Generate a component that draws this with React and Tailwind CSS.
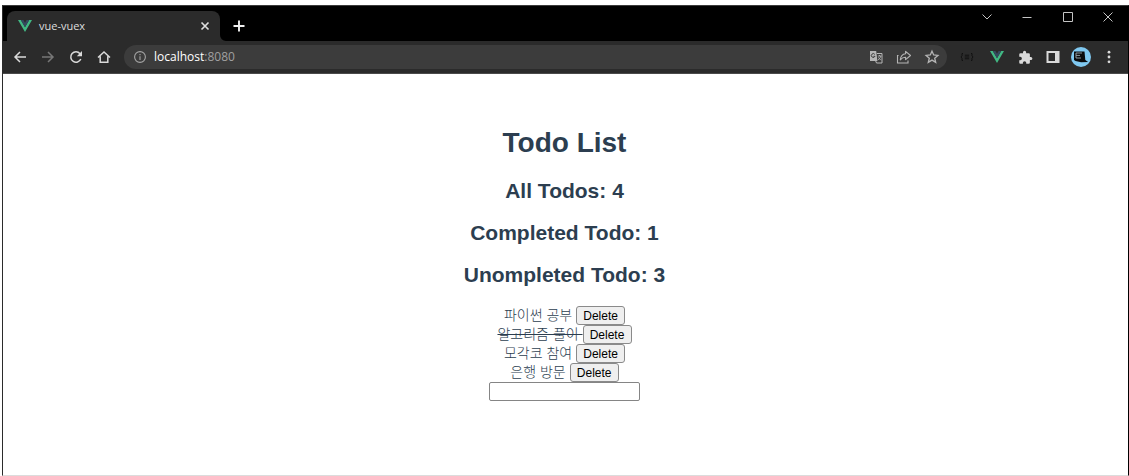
import React, { useState } from 'react';

const initialTodos = [
  { id: 1, text: '파이썬 공부', done: false },
  { id: 2, text: '알고리즘 풀이', done: true },
  { id: 3, text: '모각코 참여', done: false },
  { id: 4, text: '은행 방문', done: false },
];

function VueLogo() {
  return (
    <svg viewBox="0 0 14 12" className="w-[14px] h-3" aria-hidden="true">
      <path d="M0 0h2.8L7 7.2 11.2 0H14L7 12z" fill="#41b883" />
      <path d="M2.8 0h2.6L7 2.8 8.6 0h2.6L7 7.2z" fill="#35495e" />
    </svg>
  );
}

function Line({ children, className = 'w-4 h-4' }) {
  return (
    <svg viewBox="0 0 16 16" className={className} fill="none" stroke="currentColor" strokeWidth="1.5" aria-hidden="true">
      {children}
    </svg>
  );
}

function IconButton({ label, className = 'w-7', children }) {
  return (
    <button type="button" aria-label={label} className={`${className} h-6 shrink-0 flex items-center justify-center`}>
      {children}
    </button>
  );
}

function TabStrip() {
  return (
    <div className="flex items-end justify-between h-[35px] pl-1 bg-black">
      <div className="flex items-end">
        <div className="relative flex items-center w-[213px] h-[30px] pl-[11px] pr-2 rounded-t-lg bg-[#2b2b2b] text-[#dedede]">
          <VueLogo />
          <span className="ml-[7px] grow text-[11px] leading-4">vue-vuex</span>
          <IconButton label="Close tab" className="w-[14px]">
            <Line className="w-[14px] h-[14px]">
              <path d="M4 4l8 8M12 4l-8 8" strokeWidth="1.9" />
            </Line>
          </IconButton>
          <svg viewBox="0 0 6 6" className="absolute left-full bottom-0 w-[6px] h-[6px]" aria-hidden="true">
            <path d="M0 0a6 6 0 0 0 6 6H0z" fill="#2b2b2b" />
          </svg>
        </div>
        <IconButton label="New tab" className="w-[38px] mb-[3px] text-[#f1f1f1]">
          <Line>
            <path d="M8 2.5v11M2.5 8h11" strokeWidth="1.9" />
          </Line>
        </IconButton>
      </div>
      <div className="flex self-start text-[#c4c4c4]">
        <IconButton label="Search tabs" className="w-10">
          <Line><path d="M3.5 4.5L8 9l4.5-4.5" strokeWidth="1" /></Line>
        </IconButton>
        <IconButton label="Minimize" className="w-10">
          <Line><path d="M3.5 7.5h9" strokeWidth="1" /></Line>
        </IconButton>
        <IconButton label="Maximize" className="w-[41px]">
          <Line><path d="M3.5 2.5h9v9h-9z" strokeWidth="1" /></Line>
        </IconButton>
        <IconButton label="Close" className="w-10">
          <Line><path d="M3.5 2.5l9 9M12.5 2.5l-9 9" strokeWidth="1" /></Line>
        </IconButton>
      </div>
    </div>
  );
}

function Toolbar() {
  return (
    <div className="flex items-center h-[33px] pl-[3px] pr-[5px] border-b border-[#4a4a4a] bg-[#2b2b2b] text-[#dadada]">
      <IconButton label="Back">
        <Line><path d="M14 8H3M8 3L3 8l5 5" /></Line>
      </IconButton>
      <IconButton label="Forward">
        <Line className="w-4 h-4 text-[#777777]"><path d="M2 8h11M8 3l5 5-5 5" /></Line>
      </IconButton>
      <IconButton label="Reload">
        <Line>
          <path d="M12.8 10A5.2 5.2 0 1 1 12 4.7" />
          <path d="M14 2v5.2H8.8z" fill="currentColor" stroke="none" />
        </Line>
      </IconButton>
      <IconButton label="Home">
        <Line><path d="M2 8.5L8 3l6 5.5M4.2 7.2v6.1h7.6V7.2" /></Line>
      </IconButton>
      <div className="flex grow items-center h-6 ml-[6px] mr-1 pl-[9px] pr-px rounded-full bg-[#3c3c3c]">
        <svg viewBox="0 0 14 14" className="w-[14px] h-[14px] text-[#a5a5a5]" fill="none" stroke="currentColor" strokeWidth="1.1" aria-hidden="true">
          <circle cx="7" cy="7" r="5.4" />
          <path d="M7 6.3v3.6M7 4v1.2" />
        </svg>
        <div className="grow ml-[7px] text-[12px] leading-4 text-[#a0a0a0]">
          <span className="text-white">localhost</span>:8080
        </div>
        <div className="flex text-[#b5b5b5]">
          <IconButton label="Translate this page">
            <Line>
              <path d="M2 2h6.2l1.2 10H2z" fill="currentColor" stroke="none" />
              <path d="M8.8 4.5H14V14H8.5l-.8-2" strokeWidth="1" />
              <path d="M6.8 5.4A1.9 1.9 0 1 0 7 7.3H5.4" stroke="#3c3c3c" strokeWidth="1" />
              <path d="M9.8 7h3.6M11.5 6v1M12.8 7c-.3 1.8-1.6 3.2-3 4M10.3 8.4l2.6 2.8" strokeWidth=".9" />
            </Line>
          </IconButton>
          <IconButton label="Share this page">
            <Line>
              <path d="M2.5 6.5h-1v7.5h10.5v-2.5" strokeWidth="1.1" />
              <path d="M9.6 2.3L14.5 6.5l-4.9 4.2V8.3C7.3 8.2 5.8 9 4.3 10.9 4.6 7.5 6.7 5.1 9.6 4.8z" strokeWidth="1.1" strokeLinejoin="round" />
            </Line>
          </IconButton>
          <IconButton label="Bookmark this tab">
            <Line>
              <path d="M8 2.2l1.7 3.8 4.2.4-3.2 2.8 1 4.1L8 11.1l-3.7 2.2 1-4.1-3.2-2.8 4.2-.4z" strokeWidth="1.3" />
            </Line>
          </IconButton>
        </div>
      </div>
      <IconButton label="JSON viewer" className="w-8">
        <Line className="w-4 h-4 text-[#111111]">
          <path d="M4 4.5H3v2.2L2 8l1 1.3v2.2h1M12 4.5h1v2.2L14 8l-1 1.3v2.2h-1M5.8 6.2h4.4M5.8 8h4.4M5.8 9.8h4.4" strokeWidth="1" />
        </Line>
      </IconButton>
      <IconButton label="Vue.js devtools"><VueLogo /></IconButton>
      <IconButton label="Extensions">
        <svg viewBox="0 0 24 24" className="w-[15px] h-[15px]" fill="currentColor" aria-hidden="true">
          <path d="M20.5 11H19V7a2 2 0 0 0-2-2h-4V3.5a2.5 2.5 0 0 0-5 0V5H4a2 2 0 0 0-2 2v3.8h1.5a2.7 2.7 0 0 1 0 5.4H2V20c0 1.1.9 2 2 2h3.8v-1.5a2.7 2.7 0 0 1 5.4 0V22H17a2 2 0 0 0 2-2v-4h1.5a2.5 2.5 0 0 0 0-5z" />
        </svg>
      </IconButton>
      <IconButton label="Side panel">
        <Line>
          <path d="M1.5 2h13v12h-13zM3.5 4v8H10V4z" fill="currentColor" fillRule="evenodd" stroke="none" />
        </Line>
      </IconButton>
      <IconButton label="Profile">
        <svg viewBox="0 0 20 20" className="w-5 h-5" aria-hidden="true">
          <circle cx="10" cy="10" r="10" fill="#7fc8f0" />
          <path d="M3 4.5h10.5l.8 8.5 2.8 2-7 .3L4.5 14 3 13z" fill="#090b0d" />
          <path d="M5 6h6M5 8.4h4M5 11h5M5 6v5" stroke="#9aa5ac" strokeWidth=".9" fill="none" />
        </svg>
      </IconButton>
      <IconButton label="Menu">
        <Line>
          <g fill="currentColor" stroke="none">
            <circle cx="8" cy="3.2" r="1.4" />
            <circle cx="8" cy="8" r="1.4" />
            <circle cx="8" cy="12.8" r="1.4" />
          </g>
        </Line>
      </IconButton>
    </div>
  );
}

function TodoPage() {
  const [todos, setTodos] = useState(initialTodos);
  const [draft, setDraft] = useState('');
  const completed = todos.filter((todo) => todo.done).length;

  const toggle = (id) =>
    setTodos(todos.map((todo) => (todo.id === id ? { ...todo, done: !todo.done } : todo)));

  const submit = (event) => {
    event.preventDefault();
    if (!draft.trim()) return;
    setTodos([...todos, { id: Date.now(), text: draft, done: false }]);
    setDraft('');
  };

  return (
    <main className="grow flex flex-col items-center pt-[53px] pr-[2px] text-[#2c3e50] font-['Liberation_Sans','Noto_Sans_CJK_KR',sans-serif]">
      <h1 className="text-[28px] leading-8 font-bold">Todo List</h1>
      <div className="flex flex-col items-center gap-[18px] mt-5 text-[21px] leading-6 font-bold">
        <h2>All Todos: {todos.length}</h2>
        <h2>Completed Todo: {completed}</h2>
        <h2>Unompleted Todo: {todos.length - completed}</h2>
      </div>
      <ul className="mt-[19px] text-[14px] leading-[19px]">
        {todos.map((todo) => (
          <li key={todo.id} className="flex items-center justify-center h-[19px]">
            <span
              onClick={() => toggle(todo.id)}
              className={todo.done ? 'whitespace-pre font-light line-through' : 'whitespace-pre font-light'}
            >
              {todo.text + ' '}
            </span>
            <button
              type="button"
              onClick={() => setTodos(todos.filter((other) => other.id !== todo.id))}
              className="w-[49px] h-[19px] rounded-[3px] border border-[#8a8a8a] bg-[#efefef] text-[12px] leading-4 text-black"
            >
              Delete
            </button>
          </li>
        ))}
      </ul>
      <form onSubmit={submit} className="flex">
        <input
          type="text"
          aria-label="New todo"
          value={draft}
          onChange={(event) => setDraft(event.target.value)}
          className="w-[151px] h-[19px] px-1 rounded-[2px] border border-[#858585] bg-white text-[12px] text-black"
        />
      </form>
    </main>
  );
}

export default function App() {
  return (
    <div className="min-h-screen flex flex-col pt-[5px] pl-[2px] bg-white font-['Open_Sans','Noto_Sans_CJK_KR',sans-serif]">
      <div className="grow flex flex-col border-t border-x border-b border-t-[#3a3a3a] border-l-[#2b2b2b] border-r-black border-b-[#dcdcdc]">
        <TabStrip />
        <Toolbar />
        <TodoPage />
      </div>
    </div>
  );
}
